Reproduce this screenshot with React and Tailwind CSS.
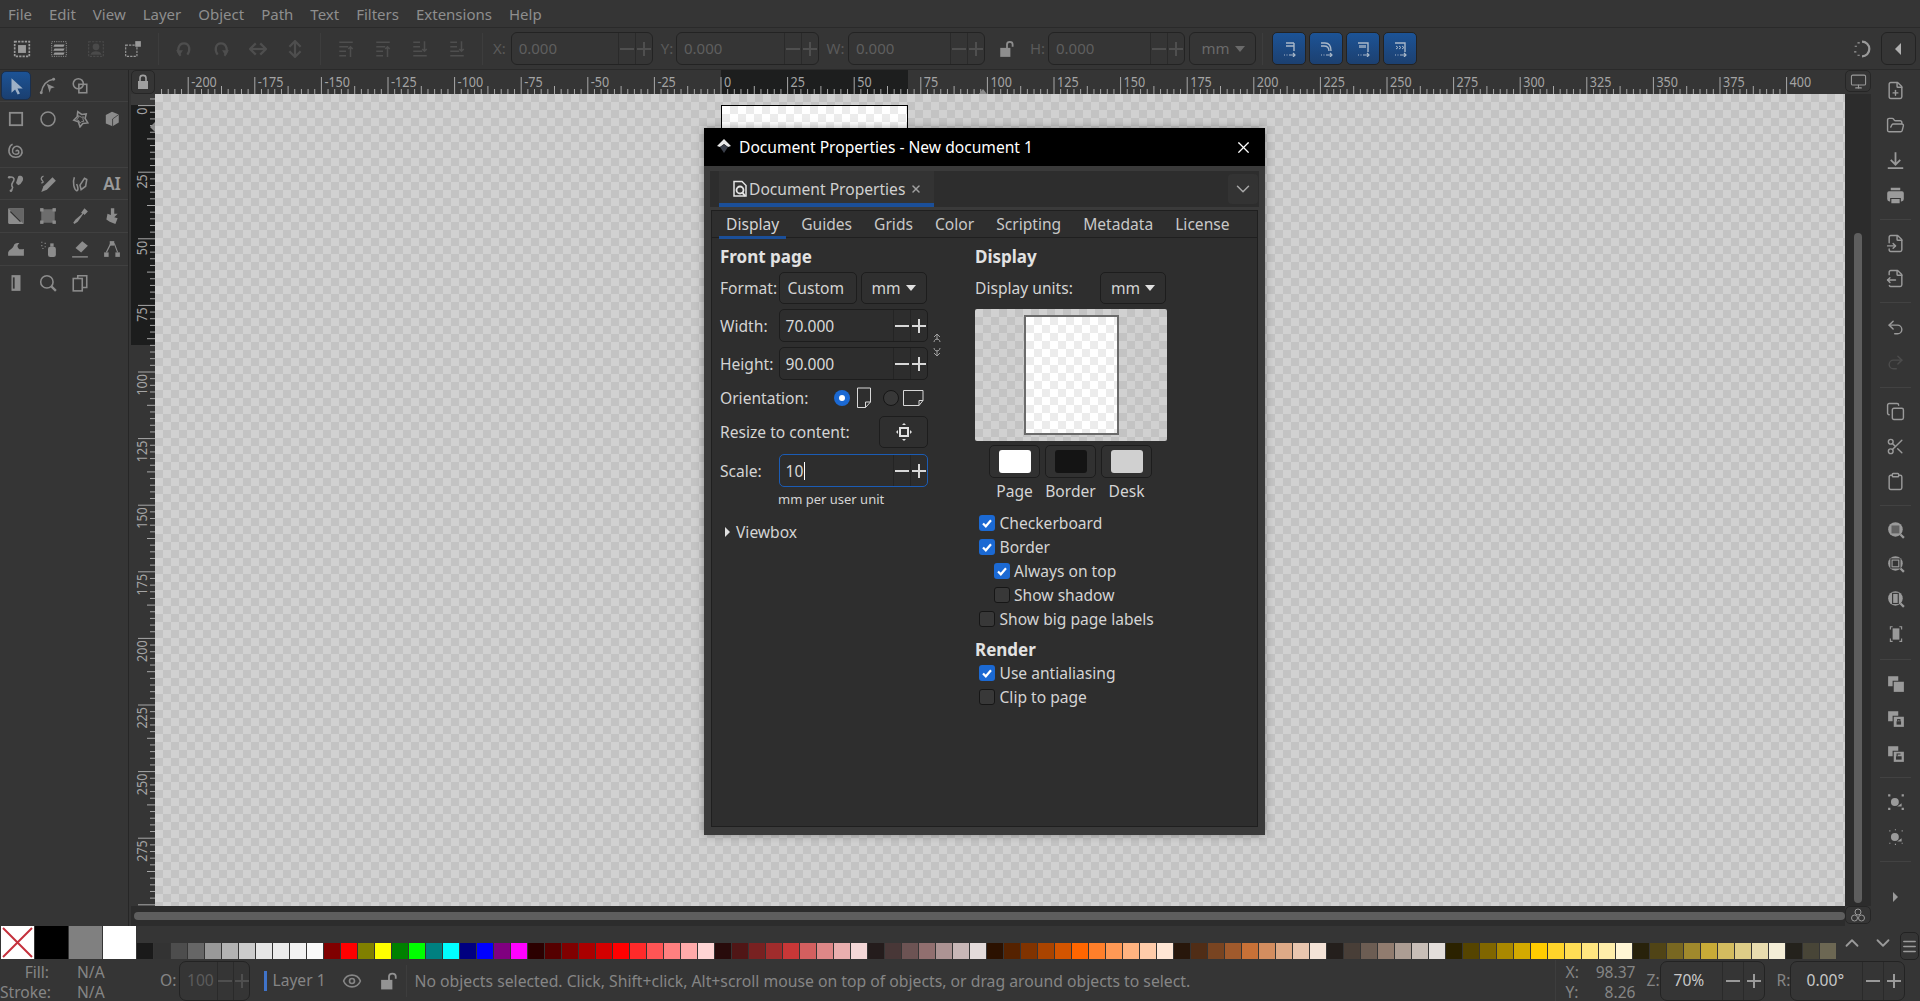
import React from 'react';
import { FilePlus, FolderOpen, FileInput, FileOutput, Undo2, Redo2, Copy, Scissors, Clipboard, Monitor, Eye, X, ChevronDown, ChevronUp, Menu } from 'lucide-react';

const checker = "bg-[repeating-conic-gradient(#c3c3c3_0%_25%,#d1d1d1_0%_50%)] bg-[length:16px_16px]";

const swatches = [
  '#1a1a1a','#333333','#4d4d4d','#666666','#999999','#b3b3b3','#cccccc','#e6e6e6','#ececec','#f2f2f2','#f9f9f9',
  '#800000','#ff0000','#808000','#ffff00','#008000','#00ff00','#008080','#00ffff','#000080','#0000ff','#800080','#ff00ff',
  '#2b0000','#550000','#800000','#aa0000','#d40000','#ff0000','#ff2a2a','#ff5555','#ff8080','#ffaaaa','#ffd5d5',
  '#280b0b','#501616','#782121','#a02c2c','#c83737','#d35f5f','#de8787','#e9afaf','#f4d7d7',
  '#241c1c','#483737','#6c5353','#916f6f','#ac9393','#c8b7b7','#e3dbdb',
  '#2b1100','#552200','#803300','#aa4400','#d45500','#ff6600','#ff7f2a','#ff9955','#ffb380','#ffccaa','#ffe6d5',
  '#28170b','#502d16','#784421','#a05a2c','#c87137','#d38d5f','#deaa87','#e9c6af','#f4e3d7',
  '#241f1c','#483e37','#6c5d53','#917c6f','#ac9d93','#c8beb7','#e3dedb',
  '#2b2200','#554400','#806600','#aa8800','#d4aa00','#ffcc00','#ffd42a','#ffdd55','#ffe680','#ffeeaa','#fff6d5',
  '#28220b','#504416','#786721','#a0892c','#c8ab37','#d3bc5f','#decd87','#e9ddaf','#f4eed7',
  '#24221c','#484537','#6c6753',
];

const MM = 2.664;

function Ico({ size = 16, className = '', children }) {
  return (
    <svg width={size} height={size} viewBox="0 0 16 16" fill="currentColor" className={className}>
      {children}
    </svg>
  );
}

const line = { fill: 'none', stroke: 'currentColor', strokeWidth: 1.4 };

function TopRuler() {
  const ticks = [];
  for (let i = -85; i <= 160; i++) {
    const x = 566 + i * 2.5 * MM;
    if (x < 0) continue;
    const len = i % 10 === 0 ? 17 : i % 5 === 0 ? 8 : 5;
    ticks.push(<line key={i} x1={x} x2={x} y1={24 - len} y2={24} stroke="#a8a8a8" strokeWidth="1" />);
  }
  const labels = [];
  for (let v = -200; v <= 400; v += 25) {
    const t = String(v);
    const w = (t.startsWith('-') ? 4 : 0) + (t.replace('-', '').length) * 7.2;
    labels.push(
      <text key={v} x={566 + v * MM + 3} y="17" fontSize="14" fill="#a4a4a4" textLength={w} lengthAdjust="spacingAndGlyphs">{t}</text>
    );
  }
  return (
    <svg width="1690" height="24" className="block">
      <rect x="566" width="187" height="24" fill="#1d1e1e" />
      {ticks}
      {labels}
      <path d="M824 24 L828 19 L832 24Z" fill="#8a8a8a" />
    </svg>
  );
}

function LeftRuler() {
  const ticks = [];
  for (let i = -4; i <= 120; i++) {
    const y = 11.6 + i * 2.5 * MM;
    if (y < 0) continue;
    const len = i % 10 === 0 ? 17 : i % 5 === 0 ? 8 : 5;
    ticks.push(<line key={i} x1={24 - len} x2={24} y1={y} y2={y} stroke="#a8a8a8" strokeWidth="1" />);
  }
  const labels = [];
  for (let v = 0; v <= 275; v += 25) {
    const y = 11.6 + v * MM + 2;
    labels.push(
      <text key={v} x="16" y={y} fontSize="14" fill="#a4a4a4" textAnchor="end" transform={`rotate(-90 16 ${y})`} textLength={String(v).length * 7.2} lengthAdjust="spacingAndGlyphs">{v}</text>
    );
  }
  return (
    <svg width="24" height="812" className="block">
      <rect width="24" height="11" fill="#3a3a3a" />
      <rect y="11" width="24" height="240" fill="#1c1d1d" />
      {ticks}
      {labels}
      <path d="M24 28 L19 33 L24 38Z" fill="#8a8a8a" />
    </svg>
  );
}

function ToolIcon({ name }) {
  switch (name) {
    case 'select': return <Ico size={18}><path d="M4 1v13l3.2-3 2.3 4.6 2-1-2.2-4.400H14z" fill="#9db0c6" /></Ico>;
    case 'node': return <Ico size={18}><path d="M2 14C3 8 6 3 13 2" {...line} /><path d="M7 6l7 3-3.500 1.200L9.500 14z" /><circle cx="2" cy="14" r="1.300" /><circle cx="13" cy="2" r="1.300" /></Ico>;
    case 'shape': return <Ico size={18}><circle cx="6.500" cy="6" r="4.500" {...line} /><rect x="7" y="6.500" width="7" height="7.500" {...line} /></Ico>;
    case 'rect': return <Ico size={18}><rect x="2.500" y="2.500" width="11" height="11" fill="none" stroke="currentColor" strokeWidth="1.600" /></Ico>;
    case 'circle': return <Ico size={18}><circle cx="8" cy="8" r="6.200" {...line} /></Ico>;
    case 'star': return <Ico size={18}><path d="M6 1.500l3.500 2.500 4-.5-1 4 2.500 4-4.500.5-2.500 3-1.500-4.500-4-1.500 3-3z" {...line} /><path d="M6.500 5l3 1.500 1.500-.5-.5 2 1 2-2 .2-1.500 1.500-1-2.200-2-1 1.500-1.500z" fill="none" stroke="currentColor" strokeWidth=".8" /></Ico>;
    case 'box': return <Ico size={18}><path d="M8 1.500l6 2.500v7l-5.500 3.500L2.500 12V4.500z" /><path d="M8.500 8v6.500M8.500 8L14 4" stroke="#353535" strokeWidth=".7" fill="none" /></Ico>;
    case 'spiral': return <Ico size={18}><path d="M8 8.500c0-1.500 2.500-1.500 2.500.5s-4.500 3-5.500 0 2-6 5-5 4.500 5 2.500 7.500-7 3-9.500 0S2 3 5 2" {...line} /></Ico>;
    case 'pencil': return <Ico size={18}><path d="M2 2c3-1 5 1 4 3S3 8 5 11l-1 3" {...line} /><path d="M10 1c3-1 5 1 4 4l-2 3-2 1-2-2z" /><circle cx="3.500" cy="14" r="1.200" /><circle cx="2" cy="2" r="1.200" /></Ico>;
    case 'pen': return <Ico size={18}><path d="M4 1c-3 1-2 3-1 4s1 2-1 2" {...line} strokeWidth="1.200" /><path d="M12 2l3 3-8 8-5 2 2-5z" /></Ico>;
    case 'callig': return <Ico size={18}><path d="M3 2C1 7 3 13 5 14c2 0 1-4 0-6" {...line} /><path d="M8 9l4-6 2 1-1 6-4 3z" {...line} /></Ico>;
    case 'text': return <span className="text-[17px] font-semibold leading-none text-[#9a9a9a]">AI</span>;
    case 'grad': return <Ico size={18}><rect x="1" y="1" width="14" height="14" rx="1" /><path d="M1 1l14 14V1z" fill="#666" /><path d="M3 4l9 9" stroke="#333" strokeWidth="1.200" /></Ico>;
    case 'mesh': return <Ico size={18}><path d="M2 2h12v12H2z" fill="#6d6d6d" /><rect x="1" y="1" width="3" height="3" /><rect x="12" y="1" width="3" height="3" /><rect x="1" y="12" width="3" height="3" /><rect x="12" y="12" width="3" height="3" /></Ico>;
    case 'dropper': return <Ico size={18}><path d="M12 1l3 3-3 3-1-1-5 7-3 2-1-1 2-3 6-5-1-1z" /></Ico>;
    case 'bucket': return <Ico size={18}><path d="M7 1h3v5h3l-3 3 3 1-2 5-5-2-3-2 1-5 3 1z" /></Ico>;
    case 'tweak': return <Ico size={18}><path d="M1 14v-3c1-3 4-3 5-6 .5-2 3-3 5-2-2 1-2 3-1 4 1 2 4 1 5 1v6z" /></Ico>;
    case 'spray': return <Ico size={18}><rect x="8" y="6" width="7" height="9" rx="2" /><rect x="10" y="3" width="3" height="3" /><path d="M2 2h1M5 3h1M2 5h1M5 6h1M3 7.500h1" stroke="currentColor" /></Ico>;
    case 'eraser': return <Ico size={18}><path d="M10 1l5 4-6 6-5-4z" /><path d="M1 15h14" stroke="currentColor" strokeWidth="1.200" /></Ico>;
    case 'connector': return <Ico size={18}><rect x="6" y="1" width="4" height="4" /><rect x="1" y="11" width="4" height="4" /><rect x="11" y="11" width="4" height="4" /><path d="M7 3L3 11M10 3l3 8" {...line} strokeWidth="1" /></Ico>;
    case 'page': return <Ico size={18}><rect x="4" y="1" width="8" height="14" /><path d="M6 3v10" stroke="#353535" strokeWidth="1.600" /></Ico>;
    case 'zoom': return <Ico size={18}><circle cx="7" cy="7" r="5.500" {...line} /><path d="M11 11l4 4" stroke="currentColor" strokeWidth="2" /></Ico>;
    case 'pages': return <Ico size={18}><rect x="2" y="4" width="8" height="11" {...line} /><path d="M6 4V1.500h8V12h-4" {...line} /></Ico>;
    default: return null;
  }
}

const toolRows = [
  { items: ['select', 'node', 'shape'], sep: true, h: 'h-[32px]' },
  { items: ['rect', 'circle', 'star', 'box'], h: 'h-[33px]' },
  { items: ['spiral'], sep: true, h: 'h-[33px]' },
  { items: ['pencil', 'pen', 'callig', 'text'], sep: true, h: 'h-[32px]' },
  { items: ['grad', 'mesh', 'dropper', 'bucket'], sep: true, h: 'h-[33px]' },
  { items: ['tweak', 'spray', 'eraser', 'connector'], sep: true, h: 'h-[33px]' },
  { items: ['page', 'zoom', 'pages'], h: 'h-[33px]' },
];

function Toolbox() {
  return (
    <div className="w-[129px] shrink-0 border-r border-[#262626] text-[#8c8c8c]">
      {toolRows.map((row, i) => (
        <div key={i} className={`grid ${row.h} grid-cols-4 ${row.sep ? 'border-b border-[#404040]' : ''}`}>
          {row.items.map((n) => (
            <div key={n} className={`flex items-center justify-center ${n === 'select' ? 'mx-[1px] my-[1px] rounded-[5px] border border-[#1a2f4d] bg-gradient-to-b from-[#1c5396] to-[#1a3f70]' : ''}`}>
              <ToolIcon name={n} />
            </div>
          ))}
        </div>
      ))}
    </div>
  );
}

function ZoomIco({ children }) {
  return (
    <Ico size={18}>
      <circle cx="7.500" cy="7.500" r="6.500" />
      <path d="M12 12l3 3" stroke="currentColor" strokeWidth="2" />
      {children}
    </Ico>
  );
}

function SideBtn({ children, dim }) {
  return <div className={`flex h-[35px] items-center justify-center ${dim ? 'text-[#4c4c4c]' : ''}`}>{children}</div>;
}

function SideSep({ h = 'h-[13px]' }) {
  return <div className={`mx-[9px] flex ${h} items-center`}><div className="h-px w-full bg-[#424242]" /></div>;
}

function RightPanel() {
  const sw = { size: 19, strokeWidth: 1.800 };
  return (
    <div className="flex w-[49px] shrink-0 flex-col pt-[3.500px] text-[#9a9a9a]">
      <SideBtn><FilePlus {...sw} /></SideBtn>
      <SideBtn><FolderOpen {...sw} /></SideBtn>
      <SideBtn><Ico size={19}><path d="M8 1v10M4 7.500l4 4 4-4M1.500 14.500h13" fill="none" stroke="currentColor" strokeWidth="1.500" /></Ico></SideBtn>
      <SideBtn><Ico size={19}><path d="M4 1.500h8v2H4zM2.500 4.500h11A1.500 1.500 0 0115 6v5a2 2 0 01-2 2h-.5v-3h-9v3H3a2 2 0 01-2-2V6a1.500 1.500 0 011.500-1.500zM4.500 11h7v3.500h-7z" /></Ico></SideBtn>
      <SideSep />
      <SideBtn><FileInput {...sw} /></SideBtn>
      <SideBtn><FileOutput {...sw} /></SideBtn>
      <SideSep h="h-[14px]" />
      <SideBtn><Undo2 {...sw} /></SideBtn>
      <SideBtn dim><Redo2 {...sw} /></SideBtn>
      <SideSep h="h-[15px]" />
      <SideBtn><Copy {...sw} /></SideBtn>
      <SideBtn><Scissors {...sw} /></SideBtn>
      <SideBtn><Clipboard {...sw} /></SideBtn>
      <SideSep />
      <SideBtn><ZoomIco><rect x="4" y="4" width="7" height="7" fill="#353535" opacity=".55" /></ZoomIco></SideBtn>
      <SideBtn><ZoomIco><rect x="4.500" y="4.500" width="6" height="6" fill="#353535" stroke="#9a9a9a" /><rect x="3.500" y="3.500" width="8" height="8" fill="none" stroke="#353535" /></ZoomIco></SideBtn>
      <SideBtn><ZoomIco><rect x="5" y="3" width="5" height="9" fill="#9a9a9a" stroke="#353535" /></ZoomIco></SideBtn>
      <SideBtn>
        <Ico size={18}><rect x="5" y="3" width="6" height="10" /><path d="M3 4V1.500h2M11 1.500h2V4M3 12v2.500h2M11 14.500h2V12" {...line} strokeWidth="1" /></Ico>
      </SideBtn>
      <SideSep h="h-[15px]" />
      <SideBtn><Ico size={18}><path d="M1 1h9v4H5v5H1z" /><rect x="6" y="6" width="9" height="9" /></Ico></SideBtn>
      <SideBtn><Ico size={18}><path d="M1 1h9v4H5v5H1z" /><rect x="6" y="6" width="9" height="9" /><rect x="8.500" y="10" width="4" height="3" fill="#353535" /><path d="M9.500 10V8.500h2V10" stroke="#353535" fill="none" /></Ico></SideBtn>
      <SideBtn><Ico size={18}><path d="M1 1h9v4H5v5H1z" /><rect x="6" y="6" width="9" height="9" /><rect x="8" y="10" width="5" height="3" fill="#353535" /><path d="M9 10V8h3" stroke="#353535" fill="none" /></Ico></SideBtn>
      <SideSep />
      <SideBtn><Ico size={18}><circle cx="7" cy="8" r="3.500" /><path d="M9 12l4-3v3z" /><path d="M1 1h2v2H1zM13 1h2v2h-2zM1 13h2v2H1zM13 13h2v2h-2z" /></Ico></SideBtn>
      <SideBtn><Ico size={18}><circle cx="7" cy="8" r="3.500" /><path d="M9 12l4-3v3z" /><path d="M2 2h1v1H2zM13 2h1v1h-1zM2 13h1v1H2zM13 13h1v1h-1zM7 1h1v1H7zM7 14h1v1H7z" /></Ico></SideBtn>
      <SideSep h="h-[15px]" />
      <div className="flex h-[57px] items-center justify-center">
        <div className="h-0 w-0 border-y-[5px] border-l-[5px] border-y-transparent border-l-[#9a9a9a]" />
      </div>
    </div>
  );
}

function Spin({ value, w }) {
  return (
    <div className="flex h-[33px] items-center rounded-[6px] border border-[#232323] text-[#5f5f5f]" style={{ width: w }}>
      <span className="flex-1 pl-[7px] text-[15px]">{value}</span>
      <Steppers faded />
    </div>
  );
}

function Steppers({ faded }) {
  const c = faded ? 'bg-[#4f4f4f]' : 'bg-[#d8d8d8]';
  return (
    <div className="flex h-full">
      {[0, 1].map((k) => (
        <div key={k} className={`relative flex h-full w-[17px] items-center justify-center border-l ${faded ? 'border-[#2a2a2a]' : 'border-[#242424]'}`}>
          <div className={`h-[2px] w-[14px] ${c}`} />
          {k === 1 && <div className={`absolute h-[14px] w-[2px] ${c}`} />}
        </div>
      ))}
    </div>
  );
}

function TopToolbar() {
  const Btn = ({ children }) => <div className="flex w-[37px] items-center justify-center">{children}</div>;
  const Sep = () => <div className="flex w-[14px] justify-center"><div className="h-[32px] w-px self-center bg-[#3d3d3d]" /></div>;
  const Label = ({ children, w, pl = 8 }) => <span className="text-[15px] text-[#5a5a5a]" style={{ width: w, paddingLeft: pl }}>{children}</span>;
  const Blue = ({ children }) => (
    <div className="flex h-[33px] w-[34px] items-center justify-center rounded-[5px] border border-[#232323] bg-gradient-to-b from-[#1c5396] to-[#1c4070] text-[#a9b8c9]">
      {children}
    </div>
  );
  const arrow = <path d="M3 14h1M5.500 14h1M8 14h6M12 12l2 2-2 2" stroke="currentColor" strokeWidth="1.200" fill="none" />;
  const d = 'text-[#4e4e4e]';
  return (
    <div className="flex h-[43px] items-center border-y border-[#2a2a2a] bg-[#353535] pl-[3px] pr-[4px]">
      <Btn><Ico size={18} className="text-[#9a9a9a]"><rect x="1.500" y="1.500" width="13" height="13" fill="none" stroke="currentColor" strokeWidth="1.500" strokeDasharray="2 1" /><rect x="4.500" y="4.500" width="7" height="7" /></Ico></Btn>
      <Btn><Ico size={18} className="text-[#9a9a9a]"><rect x="1.500" y="1.500" width="13" height="13" fill="none" stroke="currentColor" strokeWidth=".8" strokeDasharray="1 1" /><path d="M4 4h9l-1 2H3zM4 7.500h9l-1 2H3zM4 11h9l-1 2H3z" /></Ico></Btn>
      <Btn><Ico size={18} className="text-[#4a4a4a]"><rect x="1.500" y="1.500" width="13" height="13" fill="none" stroke="currentColor" strokeDasharray="2 1" /><circle cx="8" cy="6" r="3" /><path d="M3 13c1-4 9-4 10 0z" /></Ico></Btn>
      <Btn><Ico size={18} className="text-[#9a9a9a]"><rect x="1.500" y="4.500" width="10" height="10" fill="none" stroke="currentColor" strokeDasharray="2 1" /><rect x="10" y="1" width="5" height="5" /></Ico></Btn>
      <Sep />
      <Btn><Ico size={18} className={d}><path d="M5 14C1 10 3 3 8 3c5 0 6 6 3 10" {...line} strokeWidth="2" /><path d="M1 9h6l-3 5z" /></Ico></Btn>
      <Btn><Ico size={18} className={d}><path d="M11 14c4-4 2-11-3-11-5 0-6 6-3 10" {...line} strokeWidth="2" /><path d="M15 9H9l3 5z" /></Ico></Btn>
      <Btn><Ico size={18} className={d}><path d="M2 8h12" {...line} strokeWidth="2" /><path d="M6 3L1 8l5 5M10 3l5 5-5 5" {...line} strokeWidth="2" /></Ico></Btn>
      <Btn><Ico size={18} className={d}><path d="M8 2v12" {...line} strokeWidth="2" /><path d="M3 6l5-5 5 5M3 10l5 5 5-5" {...line} strokeWidth="2" /></Ico></Btn>
      <Sep />
      {[0, 1, 2, 3].map((k) => (
        <Btn key={k}>
          <Ico size={18} className={d}>
            <path d={k < 2 ? 'M2 2h12M2 6h8M2 10h6M2 14h6' : 'M2 2h6M2 6h6M2 10h8M2 14h12'} stroke="currentColor" strokeWidth="1.500" />
            <path d={k < 2 ? 'M12 15V6M10 8l2-2 2 2' : 'M12 1v9M10 8l2 2 2-2'} {...line} />
          </Ico>
        </Btn>
      ))}
      <Sep />
      <Label w={21.7} pl={4}>X:</Label>
      <Spin value="0.000" w={142} />
      <Label w={23.3}>Y:</Label>
      <Spin value="0.000" w={142.6} />
      <Label w={29.4}>W:</Label>
      <Spin value="0.000" w={137} />
      <div className="flex w-[45px] justify-center text-[#8e8e8e]">
        <Ico size={18}><rect x="2" y="7" width="9" height="8" /><path d="M8 7V4c0-3 5-3 5 0v2" {...line} strokeWidth="1.600" /></Ico>
      </div>
      <span className="w-[18px] text-[15px] text-[#5a5a5a]">H:</span>
      <Spin value="0.000" w={137} />
      <div className="ml-[4.500px] flex h-[33px] w-[67px] items-center justify-center gap-[5px] rounded-[6px] border border-[#232323] text-[15px] text-[#6a6a6a]">
        mm<div className="h-0 w-0 border-x-[5.500px] border-t-[6px] border-x-transparent border-t-[#6a6a6a]" />
      </div>
      <div className="ml-[6px] mr-[9px] h-[32px] w-px bg-[#3d3d3d]" />
      <div className="flex gap-[3px]">
        <Blue><Ico size={16}><path d="M5 2h8M5 5h8M13 2v8" {...line} />{arrow}</Ico></Blue>
        <Blue><Ico size={16}><path d="M3 2h4c4 0 6 3 6 8M3 5h3c3 0 5 2 5 5" {...line} />{arrow}</Ico></Blue>
        <Blue><Ico size={16}><path d="M3 2h10v9" {...line} /><path d="M4 4h7v3H4z" opacity=".7" />{arrow}</Ico></Blue>
        <Blue><Ico size={16}><path d="M3 2h10v9" {...line} /><path d="M4 5l2 1.500-2 1.500M7 5l2 1.500-2 1.500M10 5l2 1.500-2 1.500" {...line} strokeWidth="1" />{arrow}</Ico></Blue>
      </div>
      <div className="ml-auto flex items-center">
        <Ico size={18} className="mr-[10px] text-[#9a9a9a]"><path d="M8 1.500a6.500 6.500 0 010 13" {...line} strokeWidth="2" /><path d="M5 2v1M2.500 5v1M2 10v1M5 13v1" stroke="currentColor" strokeWidth="2" /></Ico>
        <div className="flex h-[33px] w-[35.500px] items-center justify-center rounded-[6px] border border-[#232323]">
          <div className="h-0 w-0 border-y-[6px] border-r-[6px] border-y-transparent border-r-[#b0b0b0]" />
        </div>
      </div>
    </div>
  );
}

function Field({ value, focused }) {
  return (
    <div className={`flex h-[33px] w-[149px] items-center rounded-[5px] border ${focused ? 'border-[#1b5cb5]' : 'border-[#1d1d1d]'} bg-[#2d2d2d]`}>
      <span className="flex flex-1 items-center pl-[6px] pt-[2px] text-[15.600px] text-[#d8d8d8]">
        {value}
        {focused && <span className="ml-[1px] h-[18px] w-px bg-white" />}
      </span>
      <Steppers />
    </div>
  );
}

function DropBtn({ children }) {
  return (
    <div className="flex h-[32px] w-[66px] items-center justify-center gap-[5px] rounded-[5px] border border-[#1d1d1d] bg-[#2f2f2f] text-[15.600px] text-[#d4d4d4]">
      <span className="pt-[2px]">{children}</span>
      <div className="h-0 w-0 border-x-[5.500px] border-t-[6px] border-x-transparent border-t-[#e0e0e0]" />
    </div>
  );
}

function Check({ label, on, indent }) {
  return (
    <div className={`flex h-[24px] items-center gap-[4.500px] ${indent ? 'pl-[18.500px]' : 'pl-[4px]'}`}>
      {on ? (
        <div className="flex h-[16px] w-[16px] items-center justify-center rounded-[3px] bg-[#1b69d3]">
          <svg width="12" height="12" viewBox="0 0 12 12"><path d="M2 6.500l2.800 2.800L10 3.200" fill="none" stroke="#fff" strokeWidth="2.200" /></svg>
        </div>
      ) : (
        <div className="h-[16px] w-[16px] rounded-[3px] border border-[#161616] bg-[#383838]" />
      )}
      <span className="pt-[2px] text-[15.600px] text-[#d4d4d4]">{label}</span>
    </div>
  );
}

function ColorBtn({ color }) {
  return (
    <div className="flex h-[33px] w-[51px] items-center justify-center rounded-[5px] border border-[#1d1d1d] bg-[#313131]">
      <div className={`h-[23px] w-[32px] rounded-[3px] ${color}`} />
    </div>
  );
}

function Dialog() {
  const tabs = ['Display', 'Guides', 'Grids', 'Color', 'Scripting', 'Metadata', 'License'];
  const rowText = 'text-[15.600px] text-[#d4d4d4]';
  return (
    <div className="absolute left-[704px] top-[128px] flex h-[707px] w-[561px] flex-col bg-[#3a3a3a] shadow-[0_0_8px_rgba(0,0,0,0.35)]">
      <div className="flex h-[38px] shrink-0 items-center bg-black pl-[12px] pr-[12px] text-[15.600px] text-white">
        <svg width="16" height="18" viewBox="0 0 16 18" className="mr-[7px]">
          <path d="M8 1l7 7-3 1-4-3-4 3-3-1z" fill="#e8e8e8" />
          <path d="M4 9l4-2.500L12 9l-2 3-2 3-2-3z" fill="#3a3f4a" />
        </svg>
        <span className="pt-[2px]">Document Properties - New document 1</span>
        <X size={19} strokeWidth={1.500} className="ml-auto" />
      </div>
      <div className="mx-[6px] mt-[5px] flex h-[36px] shrink-0 items-stretch bg-[#2d2d2d] pl-[9px] pr-[1px]">
        <div className="flex w-[215px] items-center border-b-[4px] border-[#1b4f99] bg-[#333333] pl-[13px] pt-[3px] text-[15.600px] text-[#d0d0d0]">
          <svg width="16" height="18" viewBox="0 0 16 18" className="mr-[1px] shrink-0">
            <path d="M2 1.500h8l4 4V16H2z" fill="none" stroke="#e4e4e4" strokeWidth="1.500" />
            <circle cx="8" cy="10" r="3.500" fill="none" stroke="#e4e4e4" strokeWidth="1.800" />
            <path d="M10 12l3 4" stroke="#e4e4e4" strokeWidth="2" />
          </svg>
          <span className="pt-[2px]">Document Properties</span>
          <X size={12} strokeWidth={3} className="ml-[5px] text-[#a0a0a0]" />
        </div>
        <div className="my-[3px] ml-auto flex w-[30px] items-center justify-center rounded-[4px] bg-[#333333] text-[#a8a8a8]">
          <ChevronDown size={22} strokeWidth={1.600} />
        </div>
      </div>
      <div className="mx-[7px] mb-[8px] mt-[3px] flex flex-1 flex-col border border-[#1f1f1f] bg-[#2e2e2e]">
        <div className="flex h-[27px] shrink-0 border-b border-[#1f1f1f] pl-[7px]">
          {tabs.map((t, i) => (
            <div key={t} className={`mr-[8px] flex h-[28px] items-center px-[7px] text-[15.600px] ${i === 0 ? 'border-b-[3px] border-[#1b4f99] pt-[2px] text-[#d4d4d4]' : 'pb-[1px] text-[#c8c8c8]'}`}>{t}</div>
          ))}
        </div>
        <div className="flex flex-1">
          <div className="w-[263px] shrink-0 pl-[8px]">
            <h2 className="flex h-[34px] items-center pt-[3px] text-[17px] font-bold text-[#e2e2e2]">Front page</h2>
            <div className={`flex h-[32px] items-center ${rowText}`}>
              <span className="w-[58.500px] pt-[2px]">Format:</span>
              <div className="flex h-[32px] w-[78px] items-center rounded-[5px] border border-[#1d1d1d] bg-[#2f2f2f] pl-[8px] pt-[2px]">Custom</div>
              <div className="ml-[4px]"><DropBtn>mm</DropBtn></div>
            </div>
            <div className={`mt-[5px] flex h-[33px] items-center ${rowText}`}>
              <span className="w-[58.500px] pt-[2px]">Width:</span>
              <Field value="70.000" />
              <svg width="10" height="24" viewBox="0 0 10 24" className="ml-[4px] translate-y-[19px] text-[#a0a0a0]">
                <path d="M5 7V1M2 4l3-3 3 3M2 9c0-2 2-3 3-3s3 1 3 3M5 17v6M2 20l3 3 3-3M2 15c0 2 2 3 3 3s3-1 3-3" fill="none" stroke="currentColor" />
              </svg>
            </div>
            <div className={`mt-[5px] flex h-[33px] items-center ${rowText}`}>
              <span className="w-[58.500px] pt-[2px]">Height:</span>
              <Field value="90.000" />
            </div>
            <div className={`flex h-[36px] items-center ${rowText}`}>
              <span className="w-[113.500px] pt-[2px]">Orientation:</span>
              <div className="flex h-[16px] w-[16px] items-center justify-center rounded-full bg-[#1b69d3]"><div className="h-[6px] w-[6px] rounded-full bg-white" /></div>
              <svg width="16" height="22" viewBox="0 0 16 22" className="ml-[6px]"><path d="M1.500 1h13v14l-5 5.500h-8zM14.500 15h-5v5.500" fill="none" stroke="#d8d8d8" /></svg>
              <div className="ml-[11px] h-[16px] w-[16px] rounded-full border border-[#161616] bg-[#383838]" />
              <svg width="21" height="16" viewBox="0 0 21 16" className="ml-[4px]"><path d="M.5.500h19.500v10l-4 5H.5zM20 10.500h-4v5" fill="none" stroke="#d8d8d8" /></svg>
            </div>
            <div className={`flex h-[32px] items-center ${rowText}`}>
              <span className="w-[159px] pt-[2px]">Resize to content:</span>
              <div className="flex h-[32px] w-[49px] items-center justify-center rounded-[5px] border border-[#1d1d1d] bg-[#2f2f2f]">
                <svg width="16" height="18" viewBox="0 0 16 18"><rect x="4" y="5" width="8" height="8" fill="none" stroke="#e0e0e0" strokeWidth="2" /><path d="M8 0l2 2H6zM8 18l2-2H6zM0 9l2-2v4zM16 9l-2-2v4z" fill="#e0e0e0" /></svg>
              </div>
            </div>
            <div className={`mt-[6px] flex h-[33px] items-center ${rowText}`}>
              <span className="w-[58.500px] pt-[2px]">Scale:</span>
              <Field value="10" focused />
            </div>
            <div className="mt-[2px] pl-[58px] text-[13px] leading-[20px] text-[#d4d4d4]">mm per user unit</div>
            <div className={`mt-[11px] flex h-[24px] items-center pl-[5px] ${rowText}`}>
              <div className="mr-[6px] h-0 w-0 border-y-[5.500px] border-l-[5.500px] border-y-transparent border-l-[#e0e0e0]" />
              <span className="pt-[2px]">Viewbox</span>
            </div>
          </div>
          <div className="flex-1">
            <h2 className="flex h-[34px] items-center pt-[3px] text-[17px] font-bold text-[#e2e2e2]">Display</h2>
            <div className={`flex h-[32px] w-[191px] items-center justify-between ${rowText}`}>
              <span className="pt-[2px]">Display units:</span>
              <DropBtn>mm</DropBtn>
            </div>
            <div className={`mt-[5px] flex h-[132px] w-[192px] justify-center rounded-[2px] pt-[6px] ${checker}`}>
              <div className="h-[120px] w-[95px] border-2 border-[#6b6b6b] bg-[repeating-conic-gradient(#ececec_0%_25%,#ffffff_0%_50%)] bg-[length:16px_16px]" />
            </div>
            <div className="ml-[14px] mt-[4px] flex w-[163px] justify-between">
              <ColorBtn color="bg-white" />
              <ColorBtn color="bg-[#141414]" />
              <ColorBtn color="bg-[#d0d0d0]" />
            </div>
            <div className={`ml-[14px] mt-[2px] flex w-[163px] justify-between text-center leading-[22px] ${rowText}`}>
              <span className="w-[51px]">Page</span>
              <span className="w-[51px]">Border</span>
              <span className="w-[51px]">Desk</span>
            </div>
            <div className="mt-[9px]">
              <Check label="Checkerboard" on />
              <Check label="Border" on />
              <Check label="Always on top" on indent />
              <Check label="Show shadow" indent />
              <Check label="Show big page labels" />
            </div>
            <h2 className="mt-[6px] flex h-[24px] items-center pt-[2px] text-[17px] font-bold text-[#e2e2e2]">Render</h2>
            <Check label="Use antialiasing" on />
            <Check label="Clip to page" />
          </div>
        </div>
      </div>
    </div>
  );
}

function Canvas() {
  return (
    <div className={`relative min-w-0 flex-1 overflow-hidden ${checker}`}>
      <div className="ml-[566px] mt-[11px] h-[240px] w-[187px] border border-black bg-[repeating-conic-gradient(#ececec_0%_25%,#ffffff_0%_50%)] bg-[length:16px_16px]" />
    </div>
  );
}

function Palette() {
  return (
    <div className="flex h-[33px] items-end pl-[1px] text-[#9a9a9a]">
      <div className="relative mr-px h-[33px] w-[33px] bg-white">
        <svg width="33" height="33" viewBox="0 0 33 33"><path d="M2 2l29 29M31 2L2 31" stroke="#c4303c" strokeWidth="2" /></svg>
      </div>
      <div className="mr-px h-[33px] w-[33px] bg-black" />
      <div className="mr-px h-[33px] w-[33px] bg-[#808080]" />
      <div className="mr-px h-[33px] w-[33px] bg-white" />
      {swatches.map((c, i) => (
        <div key={i} className="h-[16px] w-[17px] border-r border-[#353535]" style={{ backgroundColor: c }} />
      ))}
      <div className="flex h-[33px] flex-1 items-start pl-[4px] pt-[6px]">
        <ChevronUp size={22} strokeWidth={2} className="mr-[9px]" />
        <ChevronDown size={22} strokeWidth={2} />
        <div className="ml-[6px] flex h-[28px] w-[19px] items-center justify-center rounded-[5px] border border-[#222222]"><Menu size={17} strokeWidth={2.200} /></div>
      </div>
    </div>
  );
}

function StatusBar() {
  const fade = 'bg-[#4f4f4f]';
  const Cell = ({ w, children }) => <div className="flex h-full items-center justify-center border-l border-[#2a2a2a]" style={{ width: w }}>{children}</div>;
  const PM = ({ c = 'bg-[#9a9a9a]' }) => (
    <>
      <Cell w={21}><div className={`h-[2px] w-[14px] ${c}`} /></Cell>
      <Cell w={21}><div className="relative flex items-center justify-center"><div className={`h-[2px] w-[14px] ${c}`} /><div className={`absolute h-[14px] w-[2px] ${c}`} /></div></Cell>
    </>
  );
  return (
    <div className="flex h-[42px] items-center pt-[1px] text-[15.600px] text-[#858585]">
      <div className="w-[49px] pt-[2px] text-right leading-[20px]">
        <div>Fill:</div>
        <div>Stroke:</div>
      </div>
      <div className="ml-[28px] w-[83px] pt-[2px] leading-[20px]">
        <div>N/A</div>
        <div>N/A</div>
      </div>
      <span className="w-[19px]">O:</span>
      <div className="flex h-[40px] w-[71px] items-center rounded-[7px] border border-[#232323] pl-[7px] text-[#5c5c5c]">
        <span className="w-[30px]">100</span>
        <Cell w={17}><div className={`h-[2px] w-[14px] ${fade}`} /></Cell>
        <Cell w={16}><div className="relative flex items-center justify-center"><div className={`h-[2px] w-[14px] ${fade}`} /><div className={`absolute h-[14px] w-[2px] ${fade}`} /></div></Cell>
      </div>
      <div className="ml-[14px] h-[20px] w-[3px] bg-[#3f73c9]" />
      <span className="ml-[5.500px] w-[69px]">Layer 1</span>
      <Eye size={20} strokeWidth={2} />
      <Ico size={18} className="ml-[18px] text-[#939393]"><rect x="1" y="7" width="10" height="8.500" /><path d="M8 7V4c0-3.500 6-3.500 6 0v2" {...line} strokeWidth="1.600" /></Ico>
      <div className="ml-[8px] h-[32px] w-px bg-[#3d3d3d]" />
      <span className="ml-[8px] w-[1140px] whitespace-nowrap pt-[2px] text-[15.750px]">No objects selected. Click, Shift+click, Alt+scroll mouse on top of objects, or drag around objects to select.</span>
      <div className="h-[42px] w-px bg-[#3d3d3d]" />
      <div className="ml-[10px] w-[70px] pt-[2px] leading-[20px]">
        <div className="flex justify-between"><span>X:</span><span>98.37</span></div>
        <div className="flex justify-between"><span>Y:</span><span>8.26</span></div>
      </div>
      <span className="ml-[11px] w-[13px]">Z:</span>
      <div className="flex h-[40px] w-[105px] items-center rounded-[7px] border border-[#232323] pl-[13px] text-[#c8c8c8]">
        <span className="flex-1">70%</span>
        <PM />
      </div>
      <span className="ml-[12px] w-[13px]">R:</span>
      <div className="flex h-[40px] w-[115px] items-center rounded-[7px] border border-[#232323] pl-[16px] text-[#c8c8c8]">
        <span className="flex-1">0.00°</span>
        <PM />
      </div>
    </div>
  );
}

export default function App() {
  const menus = ['File', 'Edit', 'View', 'Layer', 'Object', 'Path', 'Text', 'Filters', 'Extensions', 'Help'];
  return (
    <div className="relative flex h-[1001px] w-[1920px] flex-col overflow-hidden bg-[#353535] font-['Noto_Sans',sans-serif]">
      <div className="flex h-[27px] items-center gap-[17px] pl-[8px] pt-[2px] text-[15px] text-[#8e8e8e]">
        {menus.map((m) => <span key={m}>{m}</span>)}
      </div>
      <TopToolbar />
      <div className="flex h-[856px]">
        <Toolbox />
        <div className="flex min-w-0 flex-1 flex-col pl-[2px]">
          <div className="flex h-[24px] shrink-0">
            <div className="flex h-[24px] w-[24px] items-center justify-center rounded-[5px] border border-[#262626] text-[#a0a0a0]">
              <Ico size={16}><rect x="3" y="7" width="10" height="8" /><path d="M5 7V4c0-3.500 6-3.500 6 0v3" {...line} strokeWidth="1.600" /></Ico>
            </div>
            <div className="w-[1690px] shrink-0"><TopRuler /></div>
            <div className="flex h-[22px] w-[26px] items-center justify-center rounded-[5px] border border-[#262626] text-[#9a9a9a]"><Monitor size={17} strokeWidth={1.500} /></div>
          </div>
          <div className="flex h-[812px] shrink-0">
            <div className="w-[24px] shrink-0"><LeftRuler /></div>
            <Canvas />
            <div className="w-[26px] shrink-0 bg-[#2c2c2c] pl-[9px] pt-[139px]">
              <div className="h-[670px] w-[8px] rounded-full bg-[#5e5e5e]" />
            </div>
          </div>
          <div className="flex h-[20px] shrink-0">
            <div className="flex flex-1 items-center bg-[#2c2c2c] pb-[1px] pl-[3px]">
              <div className="h-[8px] w-full rounded-full bg-[#5e5e5e]" />
            </div>
            <div className="flex h-[18px] w-[26px] items-center justify-center rounded-[5px] border border-[#262626] text-[#9a9a9a]">
              <svg width="16" height="16" viewBox="0 0 16 16" fill="none" stroke="currentColor"><circle cx="8" cy="5" r="3" /><circle cx="4.500" cy="11" r="3" /><circle cx="11.500" cy="11" r="3" /></svg>
            </div>
          </div>
        </div>
        <RightPanel />
      </div>
      <Palette />
      <StatusBar />
      <Dialog />
    </div>
  );
}
